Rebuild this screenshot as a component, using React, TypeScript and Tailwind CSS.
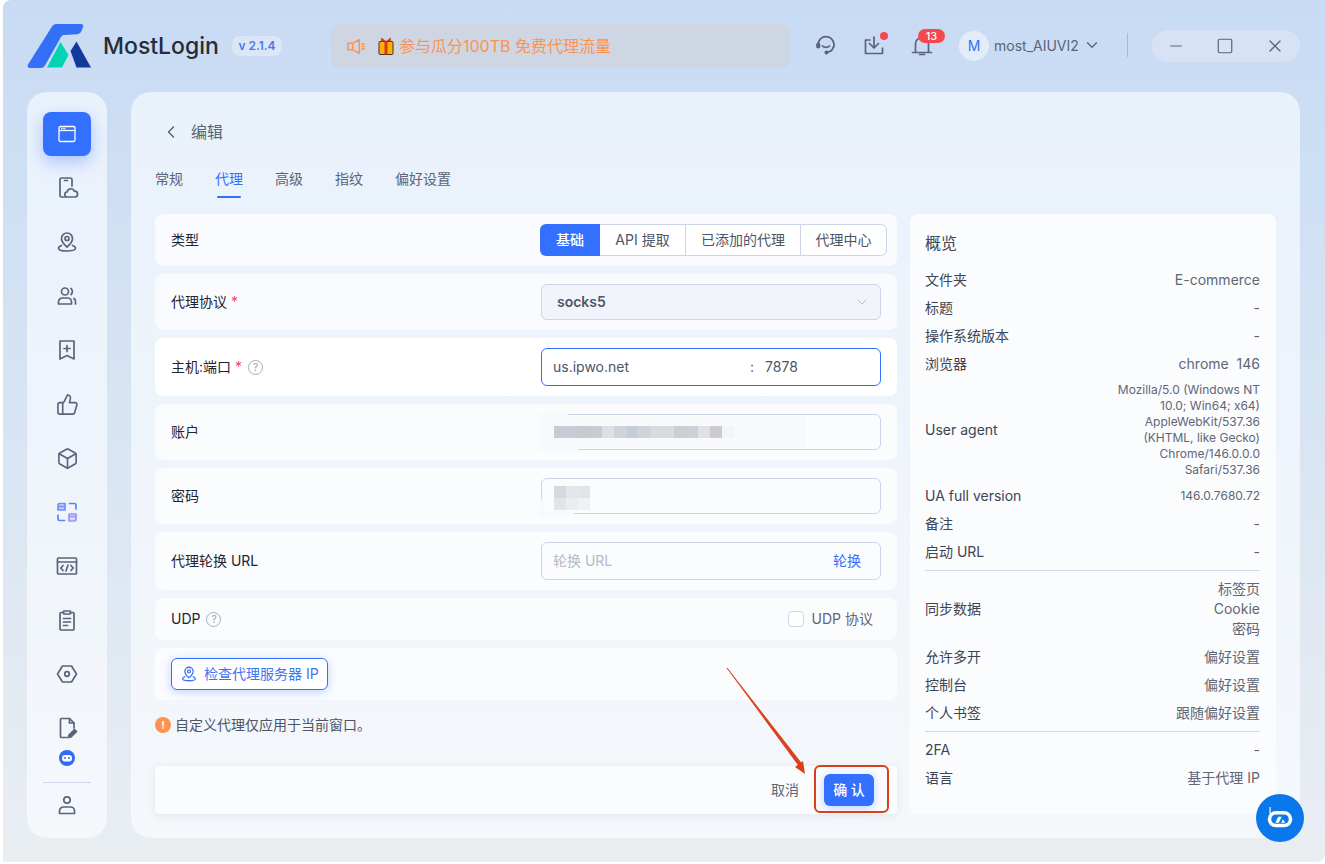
import React from 'react';
import { ChevronDown, ChevronLeft, Minus, Square, ThumbsUp, Box, X } from 'lucide-react';

const FONT = "font-['Inter','Noto_Sans_CJK_SC',sans-serif]";

function SvgIcon({ children, className = 'w-6 h-6', stroke = '#5b6478' }: { children: React.ReactNode; className?: string; stroke?: string }) {
  return (
    <svg className={className} viewBox="0 0 24 24" fill="none" stroke={stroke} strokeWidth={1.7} strokeLinecap="round" strokeLinejoin="round">
      {children}
    </svg>
  );
}

const PinIcon = ({ stroke, className }: { stroke?: string; className?: string }) => (
  <SvgIcon stroke={stroke} className={className}>
    <path d="M12 17c-3.5-3-5.5-5.600-5.500-8.500a5.500 5.500 0 0 1 11 0c0 2.900-2 5.500-5.500 8.500z" />
    <circle cx="12" cy="8.500" r="2" />
    <path d="M6.500 15.500C4.500 16.200 3.500 17.200 3.500 18.200c0 1.700 3.800 2.800 8.500 2.800s8.500-1.100 8.500-2.800c0-1-1-2-3-2.700" />
  </SvgIcon>
);

const BotGlyph = ({ className }: { className: string }) => (
  <svg className={className} viewBox="0 0 24 24">
    <path d="M3.500 2.500v6" stroke="#fff" strokeWidth="1" />
    <rect x="1.500" y="6" width="21" height="14" rx="7" fill="#fff" />
    <rect x="4.500" y="9" width="15" height="8" rx="4" fill="#0a78ea" />
    <path d="M8 16l2.500-5h3l-2.500 5zM13 16l1.500-3 2 3z" fill="#fff" />
  </svg>
);

const sideIcons: React.ReactNode[] = [
  <SvgIcon key="phone">
    <path d="M9.500 21H6.500A1.500 1.500 0 0 1 5 19.500v-16A1.500 1.500 0 0 1 6.500 2h9A1.500 1.500 0 0 1 17 3.500V10" />
    <path d="M9.500 4.500h3" />
    <path d="M12.500 21a2.500 2.500 0 0 1-.4-5 3.800 3.800 0 0 1 7.300-.8 2.900 2.900 0 0 1 .5 5.800z" />
  </SvgIcon>,
  <PinIcon key="pin" />,
  <SvgIcon key="users">
    <circle cx="10" cy="7.500" r="3.500" />
    <path d="M3.500 20v-2a4 4 0 0 1 4-4h5a4 4 0 0 1 4 4v2zM16 4.500a4 4 0 0 1 0 6M20.500 20v-2.500a3.500 3.500 0 0 0-1.500-3" />
  </SvgIcon>,
  <SvgIcon key="bookmark">
    <path d="M5 3h14v18l-7-3.500L5 21zM12 7.500v6M9 10.500h6" />
  </SvgIcon>,
  <ThumbsUp key="thumb" className="w-[23px] h-[23px] text-[#5b6478]" strokeWidth={1.7} />,
  <Box key="box" className="w-[23px] h-[23px] text-[#5b6478]" strokeWidth={1.7} />,
  <SvgIcon key="windows" stroke="#6f8ff5">
    <path d="M3 10V5a1.500 1.500 0 0 1 1.500-1.500H10V10zM3 6.500h7" fill="#c3d0fb" />
    <path d="M14 21v-7h7v5.500a1.500 1.500 0 0 1-1.500 1.500zM14 16.500h7" fill="#d8d6fb" stroke="#9b93f5" />
    <path d="M14.500 3.500h5A1.500 1.500 0 0 1 21 5v4M9.500 20.500h-5A1.500 1.500 0 0 1 3 19v-4" stroke="#5f7ff5" />
  </SvgIcon>,
  <SvgIcon key="code">
    <rect x="2.500" y="4" width="19" height="16" rx="1" />
    <path d="M2.500 8h19M8 11.500L5.800 14 8 16.500M16 11.500l2.200 2.500-2.200 2.500M13 11l-2 6" />
  </SvgIcon>,
  <SvgIcon key="clipboard">
    <path d="M8.500 4.500H6a1 1 0 0 0-1 1V21a1 1 0 0 0 1 1h12a1 1 0 0 0 1-1V5.500a1 1 0 0 0-1-1h-2.500" />
    <rect x="8.500" y="3" width="7" height="3" rx=".5" />
    <path d="M8.500 10.500h7M8.500 14h7M8.500 17.500h4" />
  </SvgIcon>,
  <SvgIcon key="hex">
    <path d="M7.500 4h9l5 8-5 8h-9l-5-8z" />
    <circle cx="12" cy="12" r="2.300" />
  </SvgIcon>,
  <SvgIcon key="file">
    <path d="M12 21.500H6.500a1 1 0 0 1-1-1v-17a1 1 0 0 1 1-1h8l4.500 4.500v5" />
    <path d="M14.500 2.500V7H19" />
    <path d="M13.500 21.500l.5-2.500 5.500-5.500 2 2-5.500 5.500z" fill="#5b6478" />
  </SvgIcon>,
];

const rows = [
  { k: '文件夹', v: ['E-commerce'] },
  { k: '标题', v: ['-'] },
  { k: '操作系统版本', v: ['-'] },
  { k: '浏览器', v: ['chrome  146'] },
];

const blurTop = ['bg-[#c9cbd3]', 'bg-[#c8cbd3]', 'bg-[#c8cad2]', 'bg-[#cbccd1]', 'bg-[#d9e1ea]', 'bg-[#d2d3d8]', 'bg-[#c5ced8]', 'bg-[#d1d3d8]', 'bg-[#d5dbe4]', 'bg-[#d8dade]', 'bg-[#cdced4]', 'bg-[#cdd0d9]', 'bg-[#dfe2e4]', 'bg-[#cacacf]'];

function Row({ label, className = '', children }: { label: React.ReactNode; className?: string; children?: React.ReactNode }) {
  return (
    <div className={`flex items-center justify-between rounded-lg bg-[#f9fbff] pl-4 pr-4 shrink-0 ${className}`}>
      <div className="flex items-center text-sm text-[#1f2430]">{label}</div>
      {children}
    </div>
  );
}

const Star = () => <span className="text-[#f5455c] ml-1">*</span>;
const Help = () => (
  <span className="ml-[6px] w-[15px] h-[15px] rounded-full border-[1.5px] border-[#a8adba] text-[#9aa0af] text-[10px] leading-none flex items-center justify-center">?</span>
);

function SummaryRow({ k, v, small, lh = 'leading-[28px]', className = '' }: { k: string; v: string[]; small?: boolean; lh?: string; className?: string }) {
  return (
    <div className={`flex items-center justify-between ${className}`}>
      <span className="text-sm text-[#3d4453] leading-[28px]">{k}</span>
      <div className={`text-right text-[#5f6675] ${small ? `text-xs ${lh} w-[160px]` : `text-sm ${lh}`}`}>
        {v.map((t) => (
          <div key={t} className="whitespace-pre">{t}</div>
        ))}
      </div>
    </div>
  );
}

export default function App() {
  return (
    <div className={`w-[1325px] h-[864px] bg-white overflow-hidden relative ${FONT}`}>
      <div className="ml-[3px] w-[1322px] h-[862px] rounded-tl-lg rounded-br-lg bg-gradient-to-b from-[#c8dbf4] to-[#e9eef2] flex flex-col">
        {/* title bar */}
        <header className="h-[92px] shrink-0 flex items-start pl-6 pt-6">
          <svg className="w-16 h-11 shrink-0" viewBox="0 0 64 44">
            <path d="M25 2.500Q26 0 29 0h25q3 0 2 3l-1.500 4q-1 3-4 3.300L37 11q-2 0-3 2L18 41.500Q16.500 44 14 44H3q-3.500 0-2-3.500z" fill="#3370f5" />
            <path d="M20 43.500L33.500 18l8 13-6.500 12.500z" fill="#00d4b4" />
            <path d="M43.500 27l6-9.500L64 43.500H49.500z" fill="#14399b" />
          </svg>
          <span className="ml-3 w-[117px] text-[23px] leading-[44px] font-medium text-[#262c38] shrink-0">MostLogin</span>
          <span className="ml-[12px] mt-3 w-[50px] h-5 rounded-lg bg-[#dbe6f6] text-[#4a78ee] text-xs font-semibold flex items-center justify-center shrink-0">v 2.1.4</span>
          <div className="ml-[49px] w-[459px] h-11 rounded-lg bg-[#cfd6e3] flex items-center pl-4 text-[#fb9450] text-base shrink-0">
            <svg className="w-[19px] h-[19px] shrink-0" viewBox="0 0 20 20" fill="none" stroke="#fb9450" strokeWidth="1.600">
              <path d="M1 6.500h5l7-3.500v14l-7-3.500H1zM6 6.500v7M15.500 7.500h3M15.500 10h3M15.500 12.500h3" />
            </svg>
            <svg className="ml-3 w-4 h-[18px] shrink-0" viewBox="0 0 16 18">
              <rect x="1" y="4.500" width="14" height="13" rx="1" fill="#ffb000" stroke="#40302a" />
              <rect x="6.500" y="4.500" width="3" height="13" fill="#d9341f" />
              <path d="M8 4.500L3.500 1v3.500zM8 4.500L12.500 1v3.500z" fill="#d9341f" stroke="#a52a18" strokeWidth=".5" />
            </svg>
            <span className="ml-[5px]">参与瓜分100TB 免费代理流量</span>
          </div>
          <div className="ml-6 w-6 h-6 mt-[9px] shrink-0">
            <SvgIcon stroke="#5b6478">
              <path d="M4.500 14.500a8 8 0 1 1 15 0M8.500 13c1.500 1.700 5.500 1.700 7 0M19 14.500c-.5 2.500-2.500 4-5 4.500" />
              <circle cx="12.500" cy="19.500" r="1.200" fill="#5b6478" />
              <rect x="3" y="10.500" width="2.500" height="4" rx="1" fill="#5b6478" />
            </SvgIcon>
          </div>
          <div className="ml-6 w-6 h-6 mt-[9px] shrink-0 relative">
            <SvgIcon stroke="#5b6478">
              <path d="M12 4v11M7.500 10.500L12 15l4.500-4.500M8 7H3.500v13.500h17V15" />
            </SvgIcon>
            <span className="absolute -top-px right-[-2px] w-2 h-2 rounded-full bg-[#f5484d]" />
          </div>
          <div className="ml-6 w-6 h-6 mt-[9px] shrink-0 relative">
            <SvgIcon stroke="#5b6478">
              <path d="M2.500 19.500h19M5.500 19.500V11a6.500 6.500 0 0 1 13 0v8.500M9.500 21.500h5" />
            </SvgIcon>
            <span className="absolute -top-1 left-2 w-[27px] h-[14px] rounded-full bg-[#f5484d] text-white text-[11px] font-medium leading-[14px] text-center">13</span>
          </div>
          <div className="ml-[25px] mt-[7px] w-[30px] h-[30px] rounded-full bg-[#e3ecf9] text-[#3370f5] text-sm flex items-center justify-center shrink-0">M</div>
          <span className="ml-[5px] mt-[7px] text-sm leading-[30px] text-[#5b6478] shrink-0">most_AIUVI2</span>
          <ChevronDown className="ml-1 mt-[12px] w-[18px] h-[18px] text-[#5b6478] shrink-0" strokeWidth={1.8} />
          <div className="ml-[26px] mt-[9px] w-px h-6 bg-[#a9b8cc] shrink-0" />
          <div className="ml-6 mt-[6px] w-[148px] h-8 rounded-full bg-[#d7e3f5] flex items-center justify-between px-[15px] text-[#5b6478] shrink-0">
            <Minus className="w-[18px] h-[18px]" strokeWidth={1.6} />
            <Square className="w-[18px] h-[18px]" strokeWidth={1.6} />
            <X className="w-5 h-5" strokeWidth={1.6} />
          </div>
        </header>

        <div className="flex pl-6 gap-6 h-[746px]">
          {/* sidebar */}
          <aside className="w-20 h-full rounded-[20px] bg-gradient-to-b from-[#e9f1fb] to-[#f5f8fb] flex flex-col items-center pt-[20px] shrink-0">
            <div className="w-12 h-11 rounded-lg bg-[#3370ff] shadow-[0_6px_16px_rgba(51,112,255,0.35)] flex items-center justify-center shrink-0">
              <svg className="w-[18px] h-[18px]" viewBox="0 0 18 18" fill="none" stroke="#fff" strokeWidth="1.300">
                <rect x="1" y="1.500" width="16" height="15" rx="1.500" />
                <path d="M1 5.500h16" />
                <path d="M3 3.500h5" strokeDasharray="1.500 .8" />
              </svg>
            </div>
            <div className="h-[5px] shrink-0" />
            {sideIcons.map((icon, i) => (
              <div key={i} className="h-[54px] w-full flex items-center justify-center shrink-0">{icon}</div>
            ))}
            <div className="-mt-[5px] w-4 h-4 rounded-full bg-[#2f6df6] flex items-center justify-center shrink-0">
              <svg className="w-3 h-3" viewBox="0 0 12 12">
                <rect x="1" y="3" width="10" height="6.500" rx="3" fill="#fff" />
                <rect x="3" y="5" width="2" height="2" rx="1" fill="#2f6df6" />
                <rect x="7" y="5" width="2" height="2" rx="1" fill="#2f6df6" />
              </svg>
            </div>
            <div className="mt-4 w-12 h-px bg-[#cdd8ec] shrink-0" />
            <div className="h-11 flex items-center justify-center shrink-0">
              <SvgIcon>
                <circle cx="12" cy="7" r="3.200" />
                <path d="M4.500 20.500v-2.500a4 4 0 0 1 4-4h7a4 4 0 0 1 4 4v2.500z" />
              </SvgIcon>
            </div>
          </aside>

          {/* main panel */}
          <main className="w-[1169px] h-full rounded-[20px] bg-gradient-to-b from-[#e9f1fb] to-[#f5f8fb] px-6 flex flex-col shrink-0">
            <div className="h-[80px] pt-[27px] flex items-start pl-[6px] shrink-0">
              <ChevronLeft className="w-5 h-5 mt-[3px] text-[#5b6478]" strokeWidth={1.8} />
              <span className="ml-[10px] text-base leading-[26px] text-[#5b6478]">编辑</span>
            </div>
            <nav className="flex gap-8 text-sm leading-[14px] text-[#5b6478] h-[42px] shrink-0">
              {['常规', '代理', '高级', '指纹', '偏好设置'].map((t) => (
                <div key={t} className="relative h-6">
                  <span className={t === '代理' ? 'text-[#3370ff]' : ''}>{t}</span>
                  {t === '代理' && <span className="absolute left-[2px] top-6 h-[2px] w-6 bg-[#3370ff] rounded-sm" />}
                </div>
              ))}
            </nav>

            <div className="flex gap-[13px] items-start">
              {/* form */}
              <div className="w-[742px] flex flex-col gap-2 shrink-0 relative">
                <Row label="类型" className="h-[52px] pr-[10px]">
                  <div className="flex h-8 w-[347px] text-sm text-[#4d5566]">
                    <button className="w-[60px] rounded-l-md bg-[#3370ff] text-white font-medium">基础</button>
                    <button className="w-[85px] border-y border-[#ccd5e8] bg-white">API 提取</button>
                    <button className="w-[115px] border border-r-0 border-[#ccd5e8] bg-white">已添加的代理</button>
                    <button className="flex-1 rounded-r-md border border-[#ccd5e8] bg-white">代理中心</button>
                  </div>
                </Row>
                <Row label={<>代理协议 <Star /></>} className="h-14">
                  <div className="w-[340px] h-9 rounded-md border border-[#ccd5e8] bg-[#f1f4fa] flex items-center justify-between pl-[15px] pr-[10px] text-sm font-semibold text-[#4d5566]">
                    socks5
                    <ChevronDown className="w-4 h-4 text-[#b4bac8]" strokeWidth={1.5} />
                  </div>
                </Row>
                <Row label={<>主机:端口 <Star /><Help /></>} className="h-[58px] bg-white">
                  <div className="w-[340px] h-[38px] rounded-md border border-[#3370ff] bg-white flex items-center pl-[11px] text-sm text-[#4d5566]">
                    <span className="w-[197px]">us.ipwo.net</span>
                    <span>:</span>
                    <span className="ml-[11px]">7878</span>
                  </div>
                </Row>
                <Row label="账户" className="h-14 bg-[#fbfcfe]">
                  <div className="w-[340px] h-9 rounded-md border border-[#ccd5e8] relative">
                    <div className="absolute -left-[2px] top-[2px] w-[266px] h-[30px] bg-[#f8f9fc] flex items-center pl-[14px]">
                      {blurTop.map((c, i) => (
                        <span key={i} className={`w-3 h-3 ${c}`} />
                      ))}
                      <span className="w-3 h-3 bg-[#f2f4f9]" />
                    </div>
                    {/* the blur also eats part of the field's border */}
                    <span className="absolute -left-[2px] -top-[2px] w-[28px] h-1 bg-[#f8f9fc]" />
                    <span className="absolute -left-[2px] -bottom-[2px] w-[38px] h-1 bg-[#f8f9fc]" />
                  </div>
                </Row>
                <Row label="密码" className="h-14 bg-[#fbfcfe]">
                  <div className="w-[340px] h-9 rounded-md border border-[#ccd5e8] relative">
                    <span className="absolute -left-[2px] top-[20px] w-1 h-[18px] bg-[#f8f9fc]" />
                    <span className="absolute -left-[2px] -bottom-[2px] w-[34px] h-1 bg-[#f8f9fc]" />
                    <div className="absolute left-[12px] top-[7px] grid grid-cols-3 w-9 h-6">
                      <span className="bg-[#d8d9e0]" />
                      <span className="bg-[#e3e6ea]" />
                      <span className="bg-[#e2e4e9]" />
                      <span className="bg-[#e3e4ea]" />
                      <span className="bg-[#eaecf0]" />
                      <span className="bg-[#eff1f4]" />
                    </div>
                  </div>
                </Row>
                <Row label="代理轮换 URL" className="h-[58px] bg-[#fbfcfe]">
                  <div className="w-[340px] h-[38px] rounded-md border border-[#ccd5e8] flex items-center justify-between pl-[11px] pr-[19px] text-sm">
                    <span className="text-[#b4bac8]">轮换 URL</span>
                    <span className="text-[#3370ff]">轮换</span>
                  </div>
                </Row>
                <Row label={<>UDP<Help /></>} className="h-[42px] bg-[#fbfcfe] pr-6">
                  <div className="flex items-center gap-2 text-sm text-[#5f6675]">
                    <span className="w-4 h-4 rounded border border-[#ccd5e8] bg-white" />
                    UDP 协议
                  </div>
                </Row>
                <div className="h-[52px] rounded-lg bg-[#fbfcfe] flex items-center pl-4 shrink-0">
                  <button className="h-8 w-[157px] rounded-md border border-[#3370ff] bg-white shadow-[0_2px_10px_rgba(51,112,255,0.3)] flex items-center pl-2 text-sm text-[#3f72f5] whitespace-nowrap">
                    <PinIcon stroke="#3f72f5" className="w-[18px] h-[18px] shrink-0" />
                    <span className="ml-[6px]">检查代理服务器 IP</span>
                  </button>
                </div>
                <div className="mt-[7px] h-[36px] flex items-start shrink-0">
                  <span className="w-4 h-4 mt-[2px] rounded-full bg-[#fb9450] text-white text-[11px] font-bold flex items-center justify-center">!</span>
                  <span className="ml-1 text-sm leading-5 text-[#4d5566]">自定义代理仅应用于当前窗口。</span>
                </div>
                <div className="mt-[7px] h-12 rounded bg-[#fbfcfe] shadow-[0_2px_10px_rgba(120,140,170,0.15)] flex items-center justify-end pr-[23px] shrink-0">
                  <span className="text-sm text-[#5f6675] mr-[25px]">取消</span>
                  <button className="w-[50px] h-8 rounded-md bg-[#3370ff] text-white text-sm font-medium shadow-[0_2px_10px_rgba(51,112,255,0.3)]">确 认</button>
                </div>
              </div>

              {/* summary */}
              <section className="w-[366px] h-[600px] rounded-lg bg-[#fbfcfe] pl-[15px] pr-4 pt-4 shrink-0">
                <h3 className="text-base leading-[26px] text-[#3d4453] mb-[10px]">概览</h3>
                {rows.map((r) => (
                  <SummaryRow key={r.k} k={r.k} v={r.v} />
                ))}
                <SummaryRow
                  k="User agent"
                  small
                  lh="leading-4"
                  className="mt-1"
                  v={['Mozilla/5.0 (Windows NT', '10.0; Win64; x64)', 'AppleWebKit/537.36', '(KHTML, like Gecko)', 'Chrome/146.0.0.0', 'Safari/537.36']}
                />
                <SummaryRow k="UA full version" small className="mt-1" v={['146.0.7680.72']} />
                <SummaryRow k="备注" v={['-']} />
                <SummaryRow k="启动 URL" v={['-']} />
                <div className="h-px bg-[#cdd8ec] mt-1 mb-[8px]" />
                <SummaryRow k="同步数据" lh="leading-5" v={['标签页', 'Cookie', '密码']} />
                <div className="h-1" />
                <SummaryRow k="允许多开" v={['偏好设置']} />
                <SummaryRow k="控制台" v={['偏好设置']} />
                <SummaryRow k="个人书签" v={['跟随偏好设置']} />
                <div className="h-px bg-[#cdd8ec] mt-1 mb-[4px]" />
                <SummaryRow k="2FA" v={['-']} />
                <SummaryRow k="语言" v={['基于代理 IP']} />
              </section>
            </div>
          </main>
        </div>
      </div>

      {/* annotation over the screenshot */}
      <svg className="absolute left-[720px] top-[660px] w-[100px] h-[125px] pointer-events-none" viewBox="0 0 100 125">
        <path d="M7 8L79 106l3-2z" fill="#d9401a" stroke="#d9401a" strokeWidth=".8" />
        <path d="M85 114L75 107l8-6z" fill="#d9401a" />
      </svg>
      <div className="absolute left-[814px] top-[765px] w-[75px] h-12 rounded-md border-2 border-[#d9401a] pointer-events-none" />

      {/* floating assistant */}
      <button className="absolute left-[1256px] top-[794px] w-12 h-12 rounded-full bg-[#0a78ea] flex items-center justify-center">
        <BotGlyph className="w-7 h-7" />
      </button>
    </div>
  );
}
